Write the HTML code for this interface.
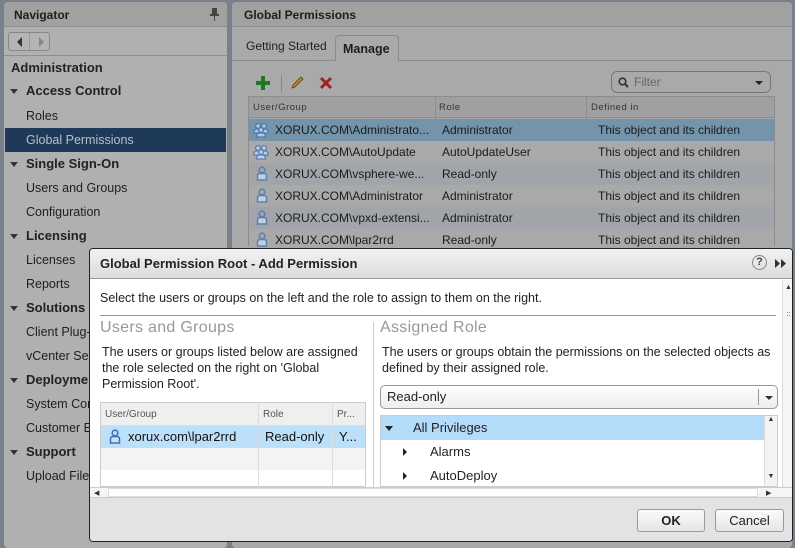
<!DOCTYPE html>
<html><head><style>
*{box-sizing:border-box;margin:0;padding:0}
body{width:795px;height:546px;overflow:hidden;background:#76818c;font-family:"Liberation Sans",sans-serif;position:relative;font-size:12px}
.abs{position:absolute}
.nav{left:4px;top:2px;width:223px;height:546px;background:#b0b0b0;border-radius:4px}
.hdr{background:#a1a1a1;height:25px;border-bottom:1px solid #8e8e8e;font-weight:bold;color:#1e1e1e;font-size:12px;padding:6px 10px;border-radius:4px 4px 0 0}
.ni{position:absolute;left:22px;font-size:12.5px;color:#1e1e1e}
.nh{position:absolute;left:10px;font-size:13px;font-weight:bold;color:#222}
.tri{display:inline-block;width:0;height:0;border-left:4px solid transparent;border-right:4px solid transparent;border-top:5px solid #333;margin-right:8px;vertical-align:middle}
.main{left:232px;top:2px;width:560px;height:546px;background:#a9a9a9;border-radius:4px}
.row{position:absolute;left:249px;width:525px;height:22px;font-size:12px;color:#1b1b1b;line-height:22px}
.row span{position:absolute}
.dlg{left:89px;top:248px;width:704px;height:294px;background:#fff;border:1px solid #222;border-radius:4px;overflow:hidden;font-family:"Liberation Sans Narrow","Liberation Sans",sans-serif}
.ic{position:absolute}
</style></head><body>
<svg width="0" height="0" style="position:absolute"><defs>
<g id="u"><circle cx="6" cy="4" r="2.8" fill="none" stroke="#3a72b8" stroke-width="1.6"/><path d="M1.5 14 V10 Q1.5 7.5 4 7.5 H8 Q10.5 7.5 10.5 10 V14 Z" fill="#cfe0f4" stroke="#3a72b8" stroke-width="1.5"/></g>
<g id="g"><circle cx="5" cy="4" r="2.4" fill="#cfe0f4" stroke="#3a72b8" stroke-width="1.4"/><circle cx="11" cy="4" r="2.4" fill="#cfe0f4" stroke="#3a72b8" stroke-width="1.4"/><path d="M1 10 Q1 7 4 7 H12 Q15 7 15 10 V11 H1Z" fill="#cfe0f4" stroke="#3a72b8" stroke-width="1.3"/><circle cx="8" cy="8" r="2.4" fill="#cfe0f4" stroke="#3a72b8" stroke-width="1.4"/><path d="M3.5 15 Q3.5 11 6.5 11 H9.5 Q12.5 11 12.5 15Z" fill="#cfe0f4" stroke="#3a72b8" stroke-width="1.3"/></g>
</defs></svg>
<div class="abs nav">
<div class="hdr">Navigator<svg class="abs" style="left:206px;top:6px" width="9" height="13"><rect x="2" y="0" width="5" height="6" fill="#444"/><rect x="0" y="6" width="9" height="2" fill="#444"/><rect x="4" y="8" width="1" height="5" fill="#444"/></svg></div>
<div class="abs" style="left:4px;top:30px;width:42px;height:19px;border:1px solid #888;border-radius:3px;background:#b4b4b4"><span class="abs" style="left:8px;top:4px;border-right:5px solid #333;border-top:5px solid transparent;border-bottom:5px solid transparent"></span><span class="abs" style="left:20px;top:0;width:1px;height:17px;background:#999"></span><span class="abs" style="left:30px;top:4px;border-left:5px solid #888;border-top:5px solid transparent;border-bottom:5px solid transparent"></span></div>
<div class="abs" style="left:0;top:53px;width:223px;height:1px;background:#8f8f8f"></div>
</div>
<div class="nh" style="top:60px;left:11px">Administration</div>
<div class="nh" style="top:83px"><span class="tri"></span>Access Control</div>
<div class="ni" style="left:26px;top:109px">Roles</div>
<div class="abs" style="left:5px;top:128px;width:221px;height:24px;background:#1f3958"></div>
<div class="ni" style="left:26px;top:133px;color:#b6c0cc">Global Permissions</div>
<div class="nh" style="top:156px"><span class="tri"></span>Single Sign-On</div>
<div class="ni" style="left:26px;top:181px">Users and Groups</div>
<div class="ni" style="left:26px;top:205px">Configuration</div>
<div class="nh" style="top:228px"><span class="tri"></span>Licensing</div>
<div class="ni" style="left:26px;top:253px">Licenses</div>
<div class="ni" style="left:26px;top:277px">Reports</div>
<div class="nh" style="top:300px"><span class="tri"></span>Solutions</div>
<div class="ni" style="left:26px;top:325px">Client Plug-ins</div>
<div class="ni" style="left:26px;top:349px">vCenter Server</div>
<div class="nh" style="top:372px"><span class="tri"></span>Deployment</div>
<div class="ni" style="left:26px;top:397px">System Config</div>
<div class="ni" style="left:26px;top:421px">Customer Exp</div>
<div class="nh" style="top:444px"><span class="tri"></span>Support</div>
<div class="ni" style="left:26px;top:469px">Upload File</div>

<div class="abs main">
<div class="hdr" style="padding-left:12px">Global Permissions</div>
<div class="abs" style="left:0;top:58px;width:560px;height:1px;background:#8e8e8e"></div>
<div class="abs" style="left:14px;top:37px;font-size:12px;color:#222">Getting Started</div>
<div class="abs" style="left:103px;top:33px;width:64px;height:26px;background:#a9a9a9;border:1px solid #8a8a8a;border-bottom:none;border-radius:4px 4px 0 0;font-weight:bold;font-size:12.5px;padding:6px 7px;color:#1e1e1e">Manage</div>
<svg class="abs" style="left:24px;top:74px" width="14" height="14"><path d="M5 0h4v5h5v4H9v5H5V9H0V5h5z" fill="#1f7a1f"/></svg>
<div class="abs" style="left:49px;top:73px;width:1px;height:17px;background:#888"></div>
<svg class="abs" style="left:58px;top:73px" width="15" height="15"><path d="M2 13 L3 10 L11 2 L13 4 L5 12 Z" fill="#b58a24" stroke="#5a4510" stroke-width=".8"/></svg>
<svg class="abs" style="left:87px;top:74px" width="14" height="14"><path d="M2 2 L12 12 M12 2 L2 12" stroke="#9e2020" stroke-width="3"/></svg>
<div class="abs" style="left:379px;top:69px;width:160px;height:22px;border:1px solid #777;border-radius:6px;color:#666;padding:3px 8px 0 22px;font-size:12px">Filter<svg class="abs" style="left:6px;top:5px" width="11" height="11"><circle cx="4.5" cy="4.5" r="3.3" fill="none" stroke="#333" stroke-width="1.6"/><path d="M7 7 L10 10" stroke="#333" stroke-width="2"/></svg><span style="position:absolute;right:7px;top:9px;border-left:4px solid transparent;border-right:4px solid transparent;border-top:4px solid #222"></span></div>
</div>
<div class="abs" style="left:248px;top:96px;width:527px;height:150px;border:1px solid #8c8c8c;background:#a9a9a9"></div>
<div class="abs" style="left:249px;top:97px;width:525px;height:21px;background:#a0a0a0;border-bottom:1px solid #8c8c8c;font-size:9.5px;color:#333;letter-spacing:.5px"><span class="abs" style="left:4px;top:5px">User/Group</span><span class="abs" style="left:190px;top:5px">Role</span><span class="abs" style="left:342px;top:5px">Defined in</span></div>
<div class="abs" style="left:435px;top:97px;width:1px;height:150px;background:#8c8c8c"></div>
<div class="abs" style="left:586px;top:97px;width:1px;height:150px;background:#8c8c8c"></div>
<div class="row" style="top:119px;background:#7394aa"><span style="left:26px">XORUX.COM\Administrato...</span><span style="left:193px">Administrator</span><span style="left:349px">This object and its children</span></div>
<div class="row" style="top:141px;background:#a9a9a9"><span style="left:26px">XORUX.COM\AutoUpdate</span><span style="left:193px">AutoUpdateUser</span><span style="left:349px">This object and its children</span></div>
<div class="row" style="top:163px;background:#a1a5a9"><span style="left:26px">XORUX.COM\vsphere-we...</span><span style="left:193px">Read-only</span><span style="left:349px">This object and its children</span></div>
<div class="row" style="top:185px;background:#a9a9a9"><span style="left:26px">XORUX.COM\Administrator</span><span style="left:193px">Administrator</span><span style="left:349px">This object and its children</span></div>
<div class="row" style="top:207px;background:#a1a5a9"><span style="left:26px">XORUX.COM\vpxd-extensi...</span><span style="left:193px">Administrator</span><span style="left:349px">This object and its children</span></div>
<div class="row" style="top:229px;background:#a9a9a9"><span style="left:26px">XORUX.COM\lpar2rrd</span><span style="left:193px">Read-only</span><span style="left:349px">This object and its children</span></div>
<div style="opacity:.7">
<svg class="ic" style="left:253px;top:122px" width="16" height="16"><use href="#g"/></svg>
<svg class="ic" style="left:253px;top:144px" width="16" height="16"><use href="#g"/></svg>
<svg class="ic" style="left:256px;top:166px" width="12" height="15"><use href="#u"/></svg>
<svg class="ic" style="left:256px;top:188px" width="12" height="15"><use href="#u"/></svg>
<svg class="ic" style="left:256px;top:210px" width="12" height="15"><use href="#u"/></svg>
<svg class="ic" style="left:256px;top:232px" width="12" height="15"><use href="#u"/></svg>
</div>

<div class="abs dlg">
<div class="abs" style="left:0;top:0;width:704px;height:30px;background:linear-gradient(#f2f2f2,#dcdcdc);border-bottom:1px solid #999;font-weight:bold;font-size:13px;color:#222;padding:7px 10px">Global Permission Root - Add Permission
<span class="abs" style="left:662px;top:6px;width:15px;height:15px;border:1px solid #888;border-radius:50%;font-size:11px;text-align:center;line-height:13px;color:#444;font-family:'Liberation Sans'">?</span><svg class="abs" style="left:685px;top:10px" width="12" height="9"><path d="M0 0 L5 4.5 L0 9Z M6 0 L11 4.5 L6 9Z" fill="#333"/></svg></div>
<div class="abs" style="left:10px;top:42px;font-size:12.5px;color:#222">Select the users or groups on the left and the role to assign to them on the right.</div>
<div class="abs" style="left:10px;top:66px;width:676px;height:1px;background:#999"></div>
<div class="abs" style="left:10px;top:70px;font-size:16px;color:#999;font-family:'Liberation Sans';letter-spacing:.3px">Users and Groups</div>
<div class="abs" style="left:290px;top:70px;font-size:16px;color:#999;font-family:'Liberation Sans';letter-spacing:.3px">Assigned Role</div>
<div class="abs" style="left:283px;top:73px;width:1px;height:165px;background:#ccc"></div>
<div class="abs" style="left:12px;top:95px;width:265px;font-size:12.5px;line-height:16px;color:#222">The users or groups listed below are assigned the role selected on the right on 'Global Permission Root'.</div>
<div class="abs" style="left:292px;top:95px;width:395px;font-size:12.5px;line-height:16px;color:#222">The users or groups obtain the permissions on the selected objects as defined by their assigned role.</div>
<div class="abs" style="left:10px;top:153px;width:266px;height:85px;border:1px solid #ccc;background:#fff">
<div style="height:23px;background:#efefef;border-bottom:1px solid #ddd;font-size:10px;color:#555;position:relative"><span class="abs" style="left:4px;top:6px">User/Group</span><span class="abs" style="left:162px;top:6px">Role</span><span class="abs" style="left:236px;top:6px">Pr...</span></div>
<div style="height:22px;background:#bde0fa;position:relative;font-size:13px;color:#111"><svg class="abs" style="left:8px;top:3px" width="12" height="15"><use href="#u"/></svg><span class="abs" style="left:27px;top:3px">xorux.com\lpar2rrd</span><span class="abs" style="left:164px;top:3px">Read-only</span><span class="abs" style="left:238px;top:3px">Y...</span></div>
<div style="height:22px;background:#f3f3f3"></div>
<div class="abs" style="left:157px;top:0;width:1px;height:85px;background:#ddd"></div>
<div class="abs" style="left:231px;top:0;width:1px;height:85px;background:#ddd"></div>
</div>
<div class="abs" style="left:290px;top:136px;width:398px;height:24px;border:1px solid #999;border-radius:5px;background:linear-gradient(#fdfdfd,#eee);font-size:13px;padding:3px 6px;color:#222">Read-only<span class="abs" style="left:377px;top:3px;width:1px;height:16px;background:#999"></span><span class="abs" style="left:384px;top:10px;border-left:4px solid transparent;border-right:4px solid transparent;border-top:4px solid #333"></span></div>
<div class="abs" style="left:290px;top:166px;width:398px;height:72px;border:1px solid #ccc;background:#fff;font-size:13px;color:#222">
<div style="height:24px;background:#b3dcfa;position:relative"><span class="abs" style="left:4px;top:10px;border-left:4px solid transparent;border-right:4px solid transparent;border-top:5px solid #222"></span><span class="abs" style="left:32px;top:4px">All Privileges</span></div>
<div style="height:24px;position:relative"><span class="abs" style="left:22px;top:8px;border-top:4px solid transparent;border-bottom:4px solid transparent;border-left:4px solid #222"></span><span class="abs" style="left:49px;top:4px">Alarms</span></div>
<div style="height:24px;position:relative"><span class="abs" style="left:22px;top:8px;border-top:4px solid transparent;border-bottom:4px solid transparent;border-left:4px solid #222"></span><span class="abs" style="left:49px;top:4px">AutoDeploy</span></div>
<div class="abs" style="left:383px;top:0;width:13px;height:70px;background:#f3f3f3;border-left:1px solid #ddd;font-size:7px;text-align:center;color:#333">▲<div style="margin-top:50px">▼</div></div>
</div>
<div class="abs" style="left:692px;top:31px;width:12px;height:207px;background:#f5f5f5;border-left:1px solid #ddd;font-size:7px;text-align:center;color:#333;padding-top:4px">▲<div style="margin-top:20px">::</div></div>
<div class="abs" style="left:0;top:238px;width:704px;height:11px;background:#f5f5f5;border-top:1px solid #ccc;border-bottom:1px solid #ccc;font-size:7px;color:#333"><span class="abs" style="left:4px;top:1px">◀</span><span class="abs" style="left:18px;top:0;width:650px;height:9px;background:#fff;border:1px solid #ddd"></span><span class="abs" style="left:676px;top:1px">▶</span></div>
<div class="abs" style="left:0;top:249px;width:704px;height:45px;background:#e3e3e3"></div>
<div class="abs" style="left:547px;top:260px;width:68px;height:23px;border:1px solid #999;border-radius:3px;background:linear-gradient(#fafafa,#e6e6e6);font-weight:bold;font-size:13px;text-align:center;line-height:21px;color:#222;font-family:'Liberation Sans'">OK</div>
<div class="abs" style="left:625px;top:260px;width:69px;height:23px;border:1px solid #999;border-radius:3px;background:linear-gradient(#fafafa,#e6e6e6);font-size:13px;text-align:center;line-height:21px;color:#222">Cancel</div>
</div>
</body></html>
